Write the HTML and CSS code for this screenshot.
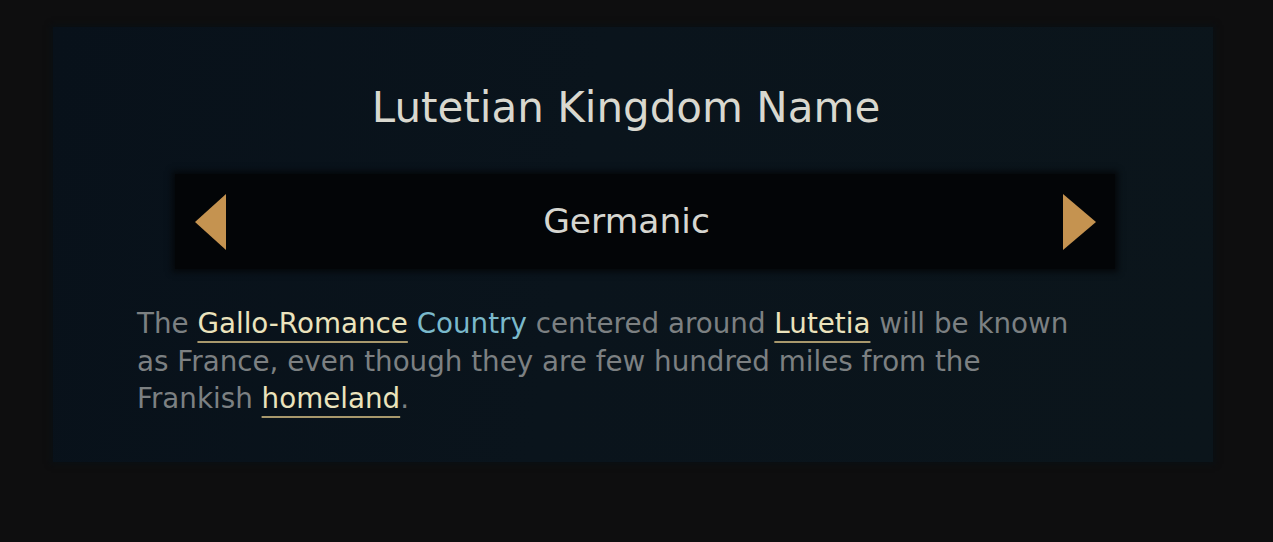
FILE: index.html
```html
<!DOCTYPE html>
<html>
<head>
	<meta charset="utf-8">
	<title>Lutetian Kingdom Name</title>
	<link rel="stylesheet" href="styles.css">
</head>
<body>

	<div class="panel">
		<h1 class="title">Lutetian Kingdom Name</h1>

		<div class="picker">
			<span class="arrow arrow-left"></span>
			<span class="picker-value">Germanic</span>
			<span class="arrow arrow-right"></span>
		</div>

		<p class="desc">The <span class="link">Gallo-Romance</span> <span class="tag">Country</span> centered around <span class="link">Lutetia</span> will be known as France, even though they are few hundred miles from the Frankish <span class="link">homeland</span>.</p>
	</div>

</body>
</html>
```

FILE: styles.css
```css
*{
    margin:0;
    padding:0;
    box-sizing: border-box;
}
body{
    background: #0e0e0f;
    font-family: "DejaVu Sans", Verdana, sans-serif;
    height: 542px;
    overflow: hidden;
}
.panel{
    margin: 27px 0 0 53px;
    width: 1160px;
    height: 435px;
    background: linear-gradient(100deg, #08111a 0%, #0a141c 45%, #0b151b 100%);
    box-shadow: 0 0 6px 2px #0a1014;
    display: flex;
    flex-direction: column;
    align-items: center;
}
.title{
    margin-top: 55px;
    margin-left: -14px;
    font-size: 42px;
    font-weight: normal;
    line-height: 52px;
    color: #d9d8cf;
}
.picker{
    margin-top: 40px;
    margin-left: 24px;
    width: 940px;
    height: 95px;
    background: #030507;
    box-shadow: 0 0 6px 3px #05080b;
    display: flex;
    align-items: center;
    justify-content: space-between;
    padding: 0 19px 0 20px;
}
.picker-value{
    font-size: 34.5px;
    color: #d6d6d0;
    margin-left: -36px;
    margin-top: -2px;
}
.arrow{
    width: 0;
    height: 0;
    border-top: 28px solid transparent;
    border-bottom: 28px solid transparent;
}
.arrow-left{
    border-right: 31px solid #c59350;
}
.arrow-right{
    border-left: 33px solid #c59350;
}
.desc{
    align-self: flex-start;
    margin: 36px 0 0 84px;
    width: 950px;
    font-size: 27.75px;
    line-height: 37.5px;
    color: #7c8082;
}
.link{
    color: #ebe3bd;
    text-decoration: underline;
    text-decoration-color: #a8986c;
    text-decoration-thickness: 2px;
    text-underline-offset: 8px;
}
.tag{
    color: #7ab9cb;
}
```
